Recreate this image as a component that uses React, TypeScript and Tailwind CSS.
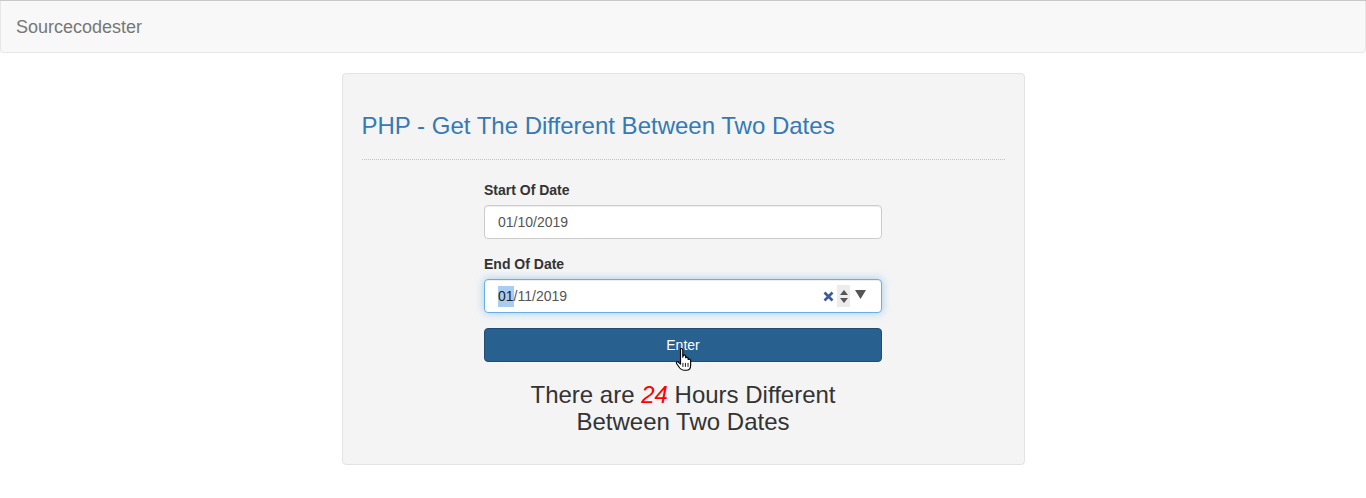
import React from "react";

export default function App() {
  const font = { fontFamily: '"Liberation Sans", Arial, Helvetica, sans-serif' };
  return (
    <div className="min-h-[498px] bg-white text-[14px] text-[#333]" style={font}>
      <div className="border-t border-[#c8c8c8]">
        <nav className="h-[52px] bg-[#f8f8f8] border border-t-0 border-[#e7e7e7] rounded-b-[4px] flex items-center px-[15px]">
          <span className="text-[18px] text-[#777] leading-[20px]">Sourcecodester</span>
        </nav>
      </div>
      <div className="mx-auto mt-[20px] w-[683px] bg-[#f4f4f4] border border-[#e3e3e3] rounded-[4px] px-[19px] pt-[19px] pb-[19px]">
        <h3 className="mt-[20px] text-[24px] leading-[26.4px] text-[#337ab7] font-normal">
          PHP - Get The Different Between Two Dates
        </h3>
        <hr className="mt-[20px] mb-[20px] border-0 border-t border-dotted border-[#c4c4c4]" />
        <div className="w-[398px] mx-auto">
          <div className="mb-[15px]">
            <label className="block font-bold text-[14px] leading-[20px] mb-[5px] text-[#333]">Start Of Date</label>
            <div className="h-[34px] bg-white border border-[#ccc] rounded-[4px] px-[13px] flex items-center text-[14px] text-[#555] shadow-[inset_0_1px_1px_rgba(0,0,0,0.075)]">
              01/10/2019
            </div>
          </div>
          <div className="mb-[15px]">
            <label className="block font-bold text-[14px] leading-[20px] mb-[5px] text-[#333]">End Of Date</label>
            <div className="h-[34px] bg-white border border-[#66afe9] rounded-[4px] pl-[13px] pr-[15px] flex items-center text-[14px] text-[#555] shadow-[inset_0_1px_1px_rgba(0,0,0,0.075),0_0_8px_rgba(102,175,233,0.6)]">
              <span className="bg-[#a9cdf0] text-[#222]">01</span>
              <span>/11/2019</span>
              <div className="ml-auto flex items-center">
                <svg width="11" height="11" viewBox="0 0 11 11" className="mr-[3px]">
                  <path d="M1.5 1.5 L9.5 9.5 M9.5 1.5 L1.5 9.5" stroke="#3b5b9a" strokeWidth="2.6" strokeLinecap="butt" />
                </svg>
                <div className="w-[13px] h-[22px] bg-[#ececec] flex flex-col items-center justify-center gap-[3px]">
                  <svg width="8" height="5" viewBox="0 0 8 5"><path d="M4 0 L8 5 L0 5 Z" fill="#555" /></svg>
                  <svg width="8" height="5" viewBox="0 0 8 5"><path d="M0 0 L8 0 L4 5 Z" fill="#555" /></svg>
                </div>
                <svg width="11" height="9" viewBox="0 0 11 9" className="ml-[5px] mb-[3px]">
                  <path d="M0 0 L11 0 L5.5 9 Z" fill="#555" />
                </svg>
              </div>
            </div>
          </div>
          <div className="relative">
            <button className="w-full h-[34px] bg-[#286090] border border-[#204d74] rounded-[4px] text-white text-[14px] leading-[20px]">
              Enter
            </button>
            <svg
              className="absolute left-[191px] top-[19px]"
              width="19"
              height="25"
              viewBox="0 0 16 22"
            >
              <path
                d="M4.5 1.5 C5.5 1 6.5 1.5 6.5 2.5 L6.5 9 L6.8 7.5 C7.5 6.8 8.8 7 9 8 L9 9.5 C9.7 8.8 11 9 11.2 10 L11.2 11 C12 10.4 13.3 10.8 13.4 11.8 L13.4 16 C13.4 18.5 12 20.5 9.5 20.5 L7.5 20.5 C5.8 20.5 4.8 19.8 3.8 18.5 L1 14.5 C0.5 13.6 1.2 12.6 2.2 13 L4.5 15 L4.5 2.5 Z"
                fill="#fff"
                stroke="#000"
                strokeWidth="1"
                strokeLinejoin="round"
              />
              <path d="M8.8 14 L8.8 17.5 M11.1 14 L11.1 17.5 M6.6 14 L6.6 17.5" stroke="#000" strokeWidth="0.8" />
            </svg>
          </div>
          <h3 className="mt-[20px] mb-[10px] text-center text-[24px] leading-[26.4px] font-normal text-[#333]">
            There are <i className="text-[#ff0000]">24</i> Hours Different
            <br />
            Between Two Dates
          </h3>
        </div>
      </div>
    </div>
  );
}
